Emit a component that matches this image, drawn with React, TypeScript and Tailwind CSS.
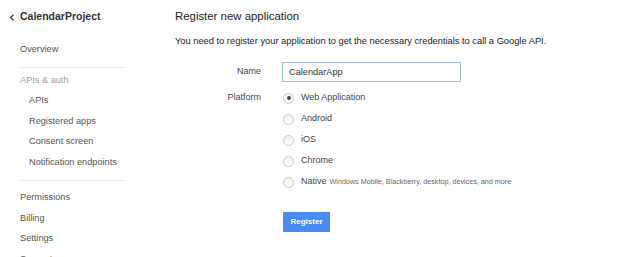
import { useState } from 'react';

const sideItems = [
  { label: 'APIs', indent: true },
  { label: 'Registered apps', indent: true },
  { label: 'Consent screen', indent: true },
  { label: 'Notification endpoints', indent: true },
];

const bottomItems = ['Permissions', 'Billing', 'Settings', 'Support'];

const platforms = [
  { id: 'web', label: 'Web Application' },
  { id: 'android', label: 'Android' },
  { id: 'ios', label: 'iOS' },
  { id: 'chrome', label: 'Chrome' },
  { id: 'native', label: 'Native', note: 'Windows Mobile, Blackberry, desktop, devices, and more' },
];

function Radio({ checked }: { checked: boolean }) {
  return (
    <span className="flex h-[11px] w-[11px] items-center justify-center rounded-full border border-[#c9c9c9] bg-gradient-to-b from-[#f4f4f4] to-white">
      {checked && <span className="h-[4px] w-[4px] rounded-full bg-[#444]" />}
    </span>
  );
}

export default function App() {
  const [name, setName] = useState('CalendarApp');
  const [platform, setPlatform] = useState('web');

  return (
    <div className="flex h-[257px] w-[624px] overflow-hidden bg-white font-['Liberation_Sans',Arial,sans-serif]">
      <aside className="w-[175px] shrink-0 pt-[10px] text-[9.2px] text-[#555]">
        <div className="flex h-[14px] items-center pl-[9px] text-[10.5px] font-bold text-[#333]">
          <svg width="6" height="7" viewBox="0 0 6 7" className="mr-[5px]">
            <path d="M4.5 0.8 L1.6 3.5 L4.5 6.2" fill="none" stroke="#444" strokeWidth="1.4" />
          </svg>
          CalendarProject
        </div>
        <div className="mt-[16px] flex h-[20.5px] items-center pl-[20px]">Overview</div>
        <div className="ml-[20px] mt-[6px] mb-[3px] h-px w-[105px] bg-[#ececec]" />
        <div className="flex h-[20.5px] items-center pl-[20px] text-[#a0a0a0]">APIs &amp; auth</div>
        {sideItems.map((item) => (
          <div key={item.label} className="flex h-[20.5px] items-center pl-[29px]">
            {item.label}
          </div>
        ))}
        <div className="ml-[20px] my-[7px] h-px w-[105px] bg-[#ececec]" />
        {bottomItems.map((item) => (
          <div key={item} className="flex h-[20.5px] items-center pl-[20px]">
            {item}
          </div>
        ))}
      </aside>

      <main className="flex-1 pt-[9px] text-[#222]">
        <h1 className="h-[14px] text-[11.4px] leading-[14px]">Register new application</h1>
        <p className="mt-[12px] h-[12px] text-[9.3px] leading-[12px]">
          You need to register your application to get the necessary credentials to call a Google API.
        </p>
        <div className="mt-[15px] grid grid-cols-[86px_1fr] gap-x-[21px] text-[9px] text-[#444]">
          <div className="flex h-[20px] items-center justify-end">Name</div>
          <input
            value={name}
            onChange={(e) => setName(e.target.value)}
            className="h-[20px] w-[179px] border border-[#9fbbeb] px-[6px] text-[9.2px] text-[#333] outline-none"
          />
          <div className="mt-[6px] flex h-[20px] items-center justify-end">Platform</div>
          <div className="mt-[6px] flex flex-col gap-[1px]">
            {platforms.map((p) => (
              <label
                key={p.id}
                onClick={() => setPlatform(p.id)}
                className="flex h-[20px] cursor-pointer items-center gap-[7px] pl-[1px]"
              >
                <Radio checked={platform === p.id} />
                <span>
                  {p.label}
                  {p.note && <span className="ml-[3px] text-[7.2px] text-[#666]">{p.note}</span>}
                </span>
              </label>
            ))}
          </div>
          <div />
          <div className="mt-[20px]">
            <button className="ml-[1px] h-[20px] w-[47px] rounded-[1px] bg-[#4a8af4] text-[8px] font-bold text-white">
              Register
            </button>
          </div>
        </div>
      </main>
    </div>
  );
}
